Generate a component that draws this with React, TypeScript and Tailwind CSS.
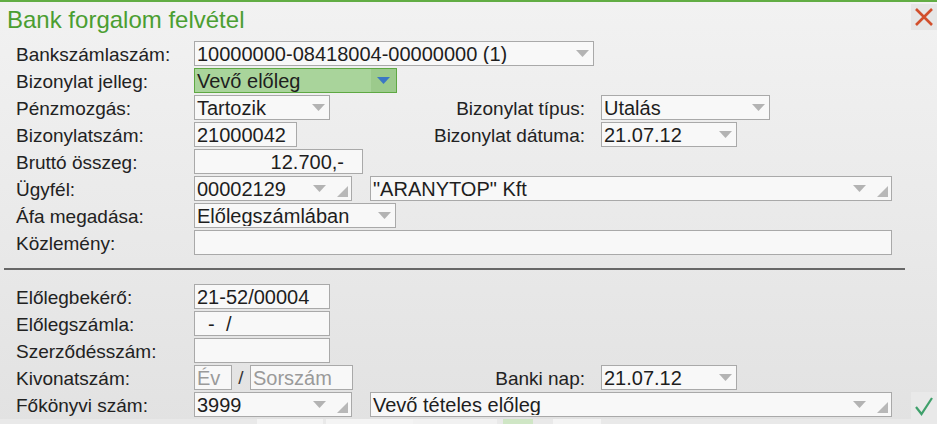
import React from "react";

const Arrow = ({ color = "#b3b3b3" }: { color?: string }) => (
  <svg width="13" height="7" viewBox="0 0 13 7" className="shrink-0">
    <polygon points="0,0 13,0 6.5,7" fill={color} />
  </svg>
);

const Resize = () => (
  <svg width="11" height="11" viewBox="0 0 11 11" className="absolute right-[3px] bottom-[3px]">
    <polygon points="11,0 11,11 0,11" fill="#b8b8b8" />
  </svg>
);

type BoxProps = {
  className: string;
  text?: string;
  arrow?: boolean;
  resize?: boolean;
  right?: boolean;
  placeholder?: boolean;
};

const Box = ({ className, text, arrow, resize, right, placeholder }: BoxProps) => (
  <div
    className={
      "relative h-[25px] shrink-0 border border-[#a9a9a9] bg-[#f8f8f8] flex items-center text-[20px] leading-none " +
      className
    }
  >
    <span
      className={
        "flex-1 whitespace-nowrap overflow-hidden pt-[1px] " +
        (right ? "text-right pr-[18px] " : "pl-[2px] ") +
        (placeholder ? "text-[#9a9a9a]" : "text-[#1e1e1e]")
      }
    >
      {text}
    </span>
    {arrow && (
      <span className={"flex items-center " + (resize ? "mr-[25px]" : "mr-[4px]")}>
        <Arrow />
      </span>
    )}
    {resize && <Resize />}
  </div>
);

const Label = ({ children }: { children: React.ReactNode }) => (
  <div className="w-[178px] shrink-0 text-[19px] leading-none pt-[1px] text-[#222] whitespace-nowrap">{children}</div>
);

const RLabel = ({ className, children }: { className: string; children: React.ReactNode }) => (
  <div className={"shrink-0 text-right pr-[16px] pt-[1px] text-[19px] leading-none text-[#222] whitespace-nowrap " + className}>
    {children}
  </div>
);

const Row = ({ children }: { children: React.ReactNode }) => (
  <div className="flex items-center h-[25px]">{children}</div>
);

export default function App() {
  return (
    <div className="w-[937px] h-[424px] overflow-hidden relative bg-gradient-to-b from-[#f2f2f2] to-[#e2e2e2] font-['Liberation_Sans',Arial,sans-serif]">
      <div className="h-[2px] bg-[#62ad44]" />
      <div className="flex items-start justify-between h-[39px]">
        <div className="pl-[7px] pt-[3px] text-[24px] leading-[30px] text-[#4b9e31]">Bank forgalom felvétel</div>
        <div className="mt-[2px] w-[26px] h-[26px] bg-[#e6e6e6] flex items-center justify-center">
          <svg width="20" height="20" viewBox="0 0 20 20">
            <path d="M2 2 L18 18 M18 2 L2 18" stroke="#d24f2c" strokeWidth="2.6" strokeLinecap="butt" />
          </svg>
        </div>
      </div>

      <div className="pl-[16px] flex flex-col gap-[2px]">
        <Row>
          <Label>Bankszámlaszám:</Label>
          <Box className="w-[400px]" text="10000000-08418004-00000000 (1)" arrow />
        </Row>
        <Row>
          <Label>Bizonylat jelleg:</Label>
          <div className="relative h-[25px] w-[203px] border border-[#5ea843] bg-[#a9d49b] flex items-center text-[20px] leading-none">
            <span className="flex-1 pl-[2px] pt-[1px] text-[#1e1e1e]">Vevő előleg</span>
            <span className="w-[25px] h-full bg-[#9cca8c] flex items-center justify-center">
              <Arrow color="#3b77c4" />
            </span>
          </div>
        </Row>
        <Row>
          <Label>Pénzmozgás:</Label>
          <Box className="w-[136px]" text="Tartozik" arrow />
          <RLabel className="w-[271px]">Bizonylat típus:</RLabel>
          <Box className="w-[169px]" text="Utalás" arrow />
        </Row>
        <Row>
          <Label>Bizonylatszám:</Label>
          <Box className="w-[103px]" text="21000042" />
          <RLabel className="w-[304px]">Bizonylat dátuma:</RLabel>
          <Box className="w-[136px]" text="21.07.12" arrow />
        </Row>
        <Row>
          <Label>Bruttó összeg:</Label>
          <Box className="w-[169px]" text="12.700,-" right />
        </Row>
        <Row>
          <Label>Ügyfél:</Label>
          <Box className="w-[158px]" text="00002129" arrow resize />
          <div className="w-[18px] shrink-0" />
          <Box className="w-[522px]" text={'"ARANYTOP" Kft'} arrow resize />
        </Row>
        <Row>
          <Label>Áfa megadása:</Label>
          <Box className="w-[202px]" text="Előlegszámlában" arrow />
        </Row>
        <Row>
          <Label>Közlemény:</Label>
          <Box className="w-[698px]" text="" />
        </Row>
      </div>

      <div className="mt-[13px] ml-[4px] w-[901px] h-[2px] bg-[#676767]" />

      <div className="mt-[14px] pl-[16px] flex flex-col gap-[2px]">
        <Row>
          <Label>Előlegbekérő:</Label>
          <Box className="w-[136px]" text="21-52/00004" />
        </Row>
        <Row>
          <Label>Előlegszámla:</Label>
          <Box className="w-[136px]" text={"\u00a0\u00a0-\u00a0\u00a0/"} />
        </Row>
        <Row>
          <Label>Szerződésszám:</Label>
          <Box className="w-[136px]" text="" />
        </Row>
        <Row>
          <Label>Kivonatszám:</Label>
          <Box className="w-[38px]" text="Év" placeholder />
          <div className="w-[18px] shrink-0 text-center text-[19px] leading-none text-[#333]">/</div>
          <Box className="w-[103px]" text="Sorszám" placeholder />
          <RLabel className="w-[248px]">Banki nap:</RLabel>
          <Box className="w-[136px]" text="21.07.12" arrow />
        </Row>
        <Row>
          <Label>Főkönyvi szám:</Label>
          <Box className="w-[158px]" text="3999" arrow resize />
          <div className="w-[18px] shrink-0" />
          <Box className="w-[522px]" text="Vevő tételes előleg" arrow resize />
          <div className="ml-[19px] mt-[3px] w-[26px] h-[29px] bg-[#e9e9e9] flex items-center justify-center">
            <svg width="20" height="20" viewBox="0 0 20 20">
              <path d="M2 11 L7.5 18 L18 2" fill="none" stroke="#3fa06b" strokeWidth="2.2" />
            </svg>
          </div>
        </Row>
      </div>

      <div className="absolute left-0 right-0 bottom-0 h-[5px] bg-[#e9e9e9] flex">
        <div className="ml-[257px] w-[66px] h-full bg-[#f4f4f4]" />
        <div className="ml-[3px] w-[87px] h-full bg-[#f4f4f4]" />
        <div className="w-[84px] h-full bg-[#f1f1f1]" />
        <div className="ml-[6px] w-[30px] h-full bg-[#cfe6c5]" />
        <div className="ml-[20px] w-[48px] h-full bg-[#f4f4f4]" />
      </div>
    </div>
  );
}
